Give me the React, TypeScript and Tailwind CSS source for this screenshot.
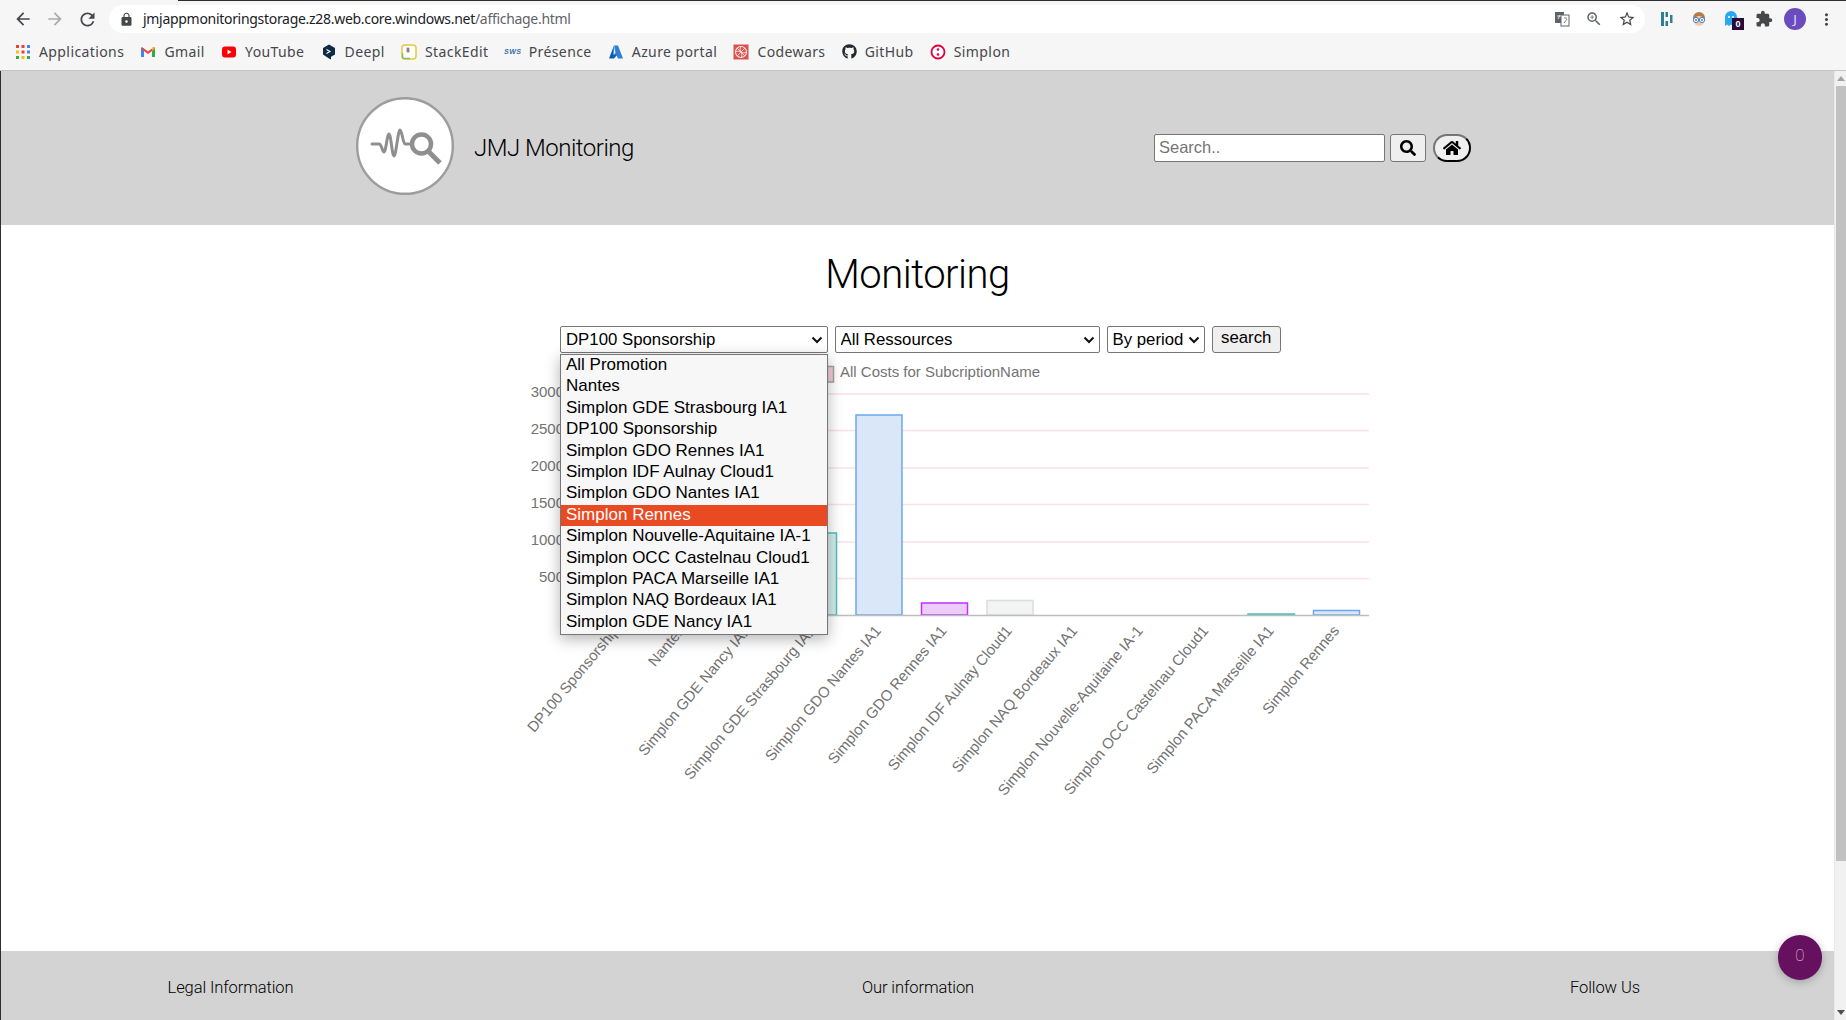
import React from "react";
import { MdArrowBack, MdArrowForward, MdRefresh, MdLock, MdStarBorder, MdZoomIn, MdExtension, MdMoreVert } from "react-icons/md";
import { FaSearch, FaHome, FaGithub } from "react-icons/fa";

const Apps = () => (
  <svg width="16" height="16" viewBox="0 0 16 16">
    {[["#ea4335", "#ea4335", "#4285f4"], ["#fbbc04", "#ea4335", "#4285f4"], ["#34a853", "#fbbc04", "#34a853"]].map((r, y) =>
      r.map((c, x) => <rect key={x + "-" + y} x={1 + x * 5.5} y={1 + y * 5.5} width="3" height="3" fill={c} />)
    )}
  </svg>
);
const Gmail = () => (
  <svg width="16" height="16" viewBox="0 0 16 16">
    <path d="M1 4v9h3V7l4 3 4-3v6h3V4l-1-1-6 4.5L2 3z" fill="#ea4335" />
    <path d="M1 4v9h3V7z" fill="#4285f4" />
    <path d="M15 4v9h-3V7z" fill="#34a853" />
    <path d="M12 7V3.5L14 3l1 1z" fill="#fbbc04" />
  </svg>
);
const Youtube = () => (
  <svg width="16" height="16" viewBox="0 0 16 16">
    <rect x="1" y="2.5" width="14" height="11" rx="3" fill="#f00" />
    <path d="M6.5 5.5v5l4-2.5z" fill="#fff" />
  </svg>
);
const Deepl = () => (
  <svg width="16" height="16" viewBox="0 0 16 16">
    <path d="M8 .5l6 3.4v6.6l-4 2.3V15.500l-2-1.100-6-3.900V3.900z" fill="#0f2b46" />
    <path d="M5.500 5.500L9 7.500l-3.500 2" fill="none" stroke="#fff" strokeWidth="1.100" />
  </svg>
);
const StackEdit = () => (
  <svg width="16" height="16" viewBox="0 0 16 16">
    <rect x="1" y="1" width="14" height="14" rx="3" fill="#fff" stroke="#e6c93c" strokeWidth="1.500" />
    <path d="M1.500 9v3.500a2 2 0 0 0 2 2H9" fill="none" stroke="#7fc25f" strokeWidth="1.500" />
    <path d="M5.500 5h3M5.500 7h3M6.300 3.500v5M7.700 3.500v5" stroke="#555" strokeWidth=".7" />
  </svg>
);
const Azure = () => (
  <svg width="16" height="16" viewBox="0 0 16 16">
    <path d="M6 1.500h4l5 13H9.800L8.800 11.500H4.500L7.500 9z" fill="#2f7fd6" />
    <path d="M6 1.500L1 14.500h5l3-3.500H5.500z" fill="#0a5cb4" />
  </svg>
);
const Codewars = () => (
  <svg width="16" height="16" viewBox="0 0 16 16">
    <rect x="0.500" y="0.500" width="15" height="15" fill="#d9534f" />
    <circle cx="8" cy="8" r="5.500" fill="none" stroke="#fbe3e1" strokeWidth="1.200" />
    <path d="M8 2.500C5 6 11 10 8 13.500M2.500 8C6 5 10 11 13.500 8M4 4c3 3 5 5 8 8M12 4c-3 3-5 5-8 8" fill="none" stroke="#fbe3e1" strokeWidth=".9" />
  </svg>
);
const SimplonIcon = () => (
  <svg width="16" height="16" viewBox="0 0 16 16">
    <circle cx="8" cy="8" r="6.500" fill="#fff" stroke="#e2003c" strokeWidth="1.800" />
    <circle cx="8" cy="5.500" r="1.300" fill="#e2003c" />
    <circle cx="8" cy="10.500" r="1.300" fill="#e2003c" />
  </svg>
);
const Presence = () => (
  <span className="w-4 h-4 flex items-center justify-center text-[7px] font-bold leading-none text-[#2f6fa8] [font-family:'Liberation_Sans',sans-serif] italic">SWS</span>
);

const bookmarks: [string, React.ReactNode][] = [
  ["Applications", <Apps />],
  ["Gmail", <Gmail />],
  ["YouTube", <Youtube />],
  ["Deepl", <Deepl />],
  ["StackEdit", <StackEdit />],
  ["Présence", <Presence />],
  ["Azure portal", <Azure />],
  ["Codewars", <Codewars />],
  ["GitHub", <FaGithub size={15} color="#24292e" />],
  ["Simplon", <SimplonIcon />],
];

const promotions = [
  "All Promotion",
  "Nantes",
  "Simplon GDE Strasbourg IA1",
  "DP100 Sponsorship",
  "Simplon GDO Rennes IA1",
  "Simplon IDF Aulnay Cloud1",
  "Simplon GDO Nantes IA1",
  "Simplon Rennes",
  "Simplon Nouvelle-Aquitaine IA-1",
  "Simplon OCC Castelnau Cloud1",
  "Simplon PACA Marseille IA1",
  "Simplon NAQ Bordeaux IA1",
  "Simplon GDE Nancy IA1",
];

const xLabels = [
  "DP100 Sponsorship",
  "Nantes",
  "Simplon GDE Nancy IA1",
  "Simplon GDE Strasbourg IA1",
  "Simplon GDO Nantes IA1",
  "Simplon GDO Rennes IA1",
  "Simplon IDF Aulnay Cloud1",
  "Simplon NAQ Bordeaux IA1",
  "Simplon Nouvelle-Aquitaine IA-1",
  "Simplon OCC Castelnau Cloud1",
  "Simplon PACA Marseille IA1",
  "Simplon Rennes",
];

const bars = [
  { x: 790, w: 46.5, top: 532, stroke: "#4bc0c0", fill: "#d2ecea" },
  { x: 856, w: 46, top: 414, stroke: "#6aa8f0", fill: "#dae7f8" },
  { x: 921.5, w: 46, top: 602, stroke: "#c030ff", fill: "#ebccfb" },
  { x: 987, w: 46, top: 599.500, stroke: "#dcdcdc", fill: "#f2f4f3" },
  { x: 1248, w: 46.500, top: 613, stroke: "#4bc0c0", fill: "#d2ecea" },
  { x: 1313.500, w: 46, top: 609.500, stroke: "#6aa8f0", fill: "#dae7f8" },
];

function Chart() {
  const grid = [393, 429.500, 467, 503.500, 541, 577.500];
  const yl: [string, number][] = [["3000", 393], ["2500", 429.500], ["2000", 467], ["1500", 503.500], ["1000", 541], ["500", 577.500]];
  return (
    <svg width="860" height="450" viewBox="520 353 860 450" className="block ml-[519px]">
      <g fontFamily="'Liberation Sans', sans-serif" fontSize="15" fill="#737373">
        {grid.map((y) => (
          <line key={y} x1="570" x2="1369" y1={y} y2={y} stroke="#fbdfe6" strokeWidth="1.500" />
        ))}
        {yl.map(([t, y]) => (
          <text key={t} x="564" y={y + 3} textAnchor="end">{t}</text>
        ))}
        {bars.map((b) => (
          <rect key={b.x} x={b.x} y={b.top} width={b.w} height={614 - b.top} fill={b.fill} stroke={b.stroke} strokeWidth="1.500" />
        ))}
        <line x1="570" x2="1369" y1="614.500" y2="614.500" stroke="#bdbdbd" strokeWidth="1.500" />
        <rect x="794" y="365.500" width="39.500" height="15.500" fill="#f3cfd9" stroke="#a3a3a3" strokeWidth="1.500" />
        <text x="840" y="375.500">All Costs for SubcriptionName</text>
        {xLabels.map((l, i) => (
          <text key={l} textAnchor="end" transform={`translate(${615 + i * 65.45 + 5},${630}) rotate(-50)`}>{l}</text>
        ))}
      </g>
    </svg>
  );
}

const Logo = () => (
  <svg width="98" height="98" viewBox="0 0 98 98" className="block mb-[5px]">
    <circle cx="49" cy="49" r="47.800" fill="#fff" stroke="#9d9d9d" strokeWidth="2.400" />
    <path d="M16 47h7c3 0 3 8 5 8s3-18 5-18 3 22 5 22 4-26 6-26 3 14 5 14h4" fill="none" stroke="#8f8f8f" strokeWidth="3" strokeLinecap="round" strokeLinejoin="round" />
    <circle cx="65.500" cy="47" r="9.500" fill="none" stroke="#8f8f8f" strokeWidth="4.500" />
    <path d="M73 55l11 11" stroke="#8f8f8f" strokeWidth="5" />
  </svg>
);

const Chevron = () => (
  <svg width="12" height="8" viewBox="0 0 12 8" className="absolute right-[5px] top-[10px] pointer-events-none">
    <path d="M1.500 1.500L6 6l4.500-4.500" fill="none" stroke="#111" strokeWidth="2" />
  </svg>
);

const selectCls =
  "block w-full h-[26.500px] appearance-none bg-white border border-[#767676] rounded-[2px] text-[16.800px] text-black pl-[5px] [font-family:'Liberation_Sans',sans-serif]";

export default function App() {
  return (
    <div className="h-[1020px] w-[1846px] overflow-hidden flex flex-col bg-white relative">
      {/* browser chrome */}
      <div className="h-[71px] shrink-0 bg-[#f6f6f6] border-b border-[#c4c4c4] [font-family:'Noto_Sans',sans-serif]">
        <div className="h-px ml-[178px] bg-[#2e2e2e]" />
        <div className="h-[32px] flex items-center relative">
          <div className="flex items-center w-[109px] pl-[13px] gap-[12px] shrink-0 mt-[4px]">
            <MdArrowBack size={20} color="#45474a" />
            <MdArrowForward size={20} color="#a9abad" />
            <MdRefresh size={21} color="#45474a" />
          </div>
          <div className="w-[1536px] h-[28px] mt-[4px] bg-white rounded-full flex items-center pl-[10px] pr-[9px]">
            <MdLock size={15} color="#45474a" />
            <span className="ml-[9px] text-[14px] leading-none text-[#202124] tracking-[-0.3px]">
              jmjappmonitoringstorage.z28.web.core.windows.net<span className="text-[#5f6368]">/affichage.html</span>
            </span>
            <div className="ml-auto flex items-center gap-[15px]">
              <svg width="16" height="16" viewBox="0 0 16 16">
                <rect x="1" y="1" width="9" height="11" fill="#5f6368" />
                <rect x="7" y="4" width="8" height="11" fill="#fff" stroke="#5f6368" />
                <path d="M3 5h4M4 8l2-4M10 7h3M11 12l2-5" stroke="#fff" strokeWidth=".8" />
                <path d="M10 7h3M10 12l3-4" stroke="#5f6368" strokeWidth=".8" />
              </svg>
              <MdZoomIn size={18} color="#5f6368" />
              <MdStarBorder size={18} color="#45474a" />
            </div>
          </div>
          <div className="flex items-center pl-[15px] relative mt-[4px]">
            <svg width="14" height="16" viewBox="0 0 14 16" className="mr-[17px]">
              <rect x="1" y="1" width="3" height="14" fill="#2e7f96" />
              <rect x="5.500" y="1" width="2.500" height="5" fill="#2e7f96" />
              <rect x="5.500" y="10" width="2.500" height="5" fill="#2e7f96" />
              <rect x="10" y="4" width="2.500" height="8" fill="#2e7f96" />
            </svg>
            <svg width="16" height="16" viewBox="0 0 16 16" className="mr-[17px]">
              <circle cx="8" cy="7" r="6" fill="#b97a4a" />
              <circle cx="8" cy="10" r="5" fill="#f1c9a5" />
              <circle cx="5" cy="9" r="2.600" fill="#fff" stroke="#3f7fd0" />
              <circle cx="11" cy="9" r="2.600" fill="#fff" stroke="#3f7fd0" />
              <circle cx="5" cy="9" r="1" fill="#3f7fd0" />
              <circle cx="11" cy="9" r="1" fill="#3f7fd0" />
            </svg>
            <span className="relative w-[16px] h-[16px] mr-[15px]">
              <svg width="14" height="16" viewBox="0 0 14 16">
                <path d="M1 15V6a6 6 0 0 1 12 0v9l-2-1.500-2 1.500-2-1.500-2 1.500-2-1.500z" fill="#2aa9f0" />
                <circle cx="5" cy="6" r="1" fill="#fff" />
                <circle cx="9" cy="6" r="1" fill="#fff" />
              </svg>
              <span className="absolute left-[8px] top-[7px] w-[12px] h-[12px] bg-[#2a0a3a] text-white text-[9px] font-bold leading-[12px] text-center [font-family:'Liberation_Sans',sans-serif]">0</span>
            </span>
            <MdExtension size={18} color="#45474a" className="mr-[11px]" />
            <span className="w-[22px] h-[22px] rounded-full bg-[#6a4cbf] text-[#e6dcff] text-[13px] leading-[22px] text-center mr-[11px]">J</span>
            <MdMoreVert size={19} color="#45474a" />
          </div>
        </div>
        <div className="h-[37px] flex items-center pl-[15px] gap-[16.200px] text-[14px] text-[#45474a] tracking-[0.4px]">
          {bookmarks.map(([name, icon]) => (
            <div key={name} className="flex items-center gap-[8px]">
              {icon}
              <span>{name}</span>
            </div>
          ))}
        </div>
      </div>

      {/* page */}
      <div className="flex-1 flex min-h-0">
        <div className="flex-1 flex flex-col min-w-0 border-l border-[#2e2e2e]">
          <header className="h-[154px] shrink-0 bg-[#d3d3d3] flex items-center pl-[355px] pr-[363px]">
            <Logo />
            <span className="ml-[20px] text-[24px] font-light tracking-[-0.5px] text-black [font-family:Roboto,sans-serif]">JMJ Monitoring</span>
            <div className="ml-auto flex items-center [font-family:'Liberation_Sans',sans-serif]">
              <input
                placeholder="Search.."
                className="w-[231px] h-[27.500px] bg-white border border-[#767676] rounded-[2px] pl-[4px] pb-[1px] text-[16.500px] placeholder:text-[#757575] outline-none"
              />
              <button className="ml-[5px] w-[36px] h-[27.500px] bg-[#efefef] border border-[#767676] rounded-[3px] flex items-center justify-center">
                <FaSearch size={16} color="#000" />
              </button>
              <button className="ml-[7px] w-[38px] h-[27.500px] bg-[#efefef] border-2 border-t-[#767676] border-l-[#767676] border-r-black border-b-black rounded-full flex items-center justify-center">
                <FaHome size={18} color="#000" />
              </button>
            </div>
          </header>

          <main className="flex-1 min-h-0 relative">
            <h1 className="h-[101px] pt-[21px] text-center text-[40px] leading-[57px] font-light tracking-[-0.5px] text-black [font-family:Roboto,sans-serif]">Monitoring</h1>
            <div className="flex justify-center gap-[7px] pl-[6px] h-[28px] items-start [font-family:'Liberation_Sans',sans-serif]">
              <div className="relative w-[267.500px]">
                <select defaultValue="DP100 Sponsorship" className={selectCls}>
                  {promotions.map((p) => (
                    <option key={p}>{p}</option>
                  ))}
                </select>
                <Chevron />
                <ul className="absolute z-10 left-0 top-[28px] w-[267.500px] h-[280.500px] bg-[#f7f7f7] border border-[#767676] shadow-[0_4px_14px_rgba(0,0,0,0.3)] text-[17px] leading-[21.400px] text-black flex flex-col">
                  {promotions.map((p) => (
                    <li key={p} className={p === "Simplon Rennes" ? "pl-[5px] bg-[#ea4a22] text-white" : "pl-[5px]"}>
                      <span className="block -translate-y-px">{p}</span>
                    </li>
                  ))}
                </ul>
              </div>
              <div className="relative w-[265px]">
                <select defaultValue="All Ressources" className={selectCls}>
                  <option>All Ressources</option>
                </select>
                <Chevron />
              </div>
              <div className="relative w-[98px]">
                <select defaultValue="By period" className={selectCls}>
                  <option>By period</option>
                </select>
                <Chevron />
              </div>
              <button className="w-[69.500px] h-[26.500px] bg-[#efefef] border border-[#767676] rounded-[3px] text-[16.800px] leading-[20px] pb-[3px] text-black">search</button>
            </div>
            <Chart />
          </main>

          <footer className="h-[69px] shrink-0 bg-[#d3d3d3] grid grid-cols-[459px_1fr_458px] items-center pt-[5px] text-[16.500px] font-light text-black [font-family:Roboto,sans-serif] tracking-[-0.1px] text-center">
            <span>Legal Information</span>
            <span>Our information</span>
            <span>Follow Us</span>
          </footer>
        </div>

        {/* scrollbar */}
        <div className="w-[12px] shrink-0 bg-[#f1f1f1] flex flex-col items-end border-l border-[#e8e8e8]">
          <div className="h-[15px] w-full shrink-0 flex items-center justify-center">
            <div className="w-0 h-0 border-x-[4px] border-x-transparent border-b-[5px] border-b-[#a3a3a3]" />
          </div>
          <div className="w-[10px] h-[775px] bg-[#c1c1c1]" />
          <div className="mt-auto h-[15px] w-full shrink-0 flex items-center justify-center">
            <div className="w-0 h-0 border-x-[4px] border-x-transparent border-t-[5px] border-t-[#505050]" />
          </div>
        </div>
      </div>

      {/* chat bubble */}
      <div className="absolute left-[1778px] top-[935px] w-[44px] h-[45px] rounded-full bg-[#66115f] shadow-[0_2px_8px_rgba(0,0,0,0.25)] flex items-center justify-center pb-[3px] text-[17px] font-thin text-[#e8c8e4] [font-family:Roboto,sans-serif]">
        0
      </div>
    </div>
  );
}
